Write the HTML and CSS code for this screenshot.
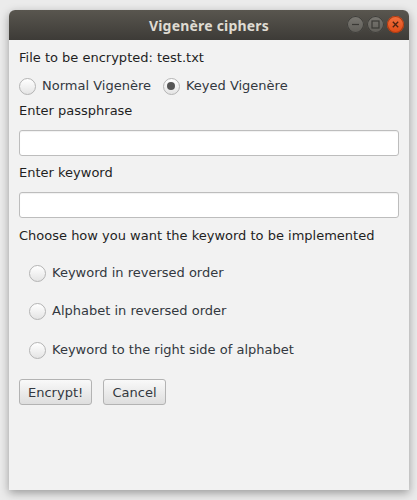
FILE: index.html
```html
<!DOCTYPE html>
<html>
<head>
<meta charset="utf-8">
<link rel="stylesheet" href="styles.css">
</head>
<body>
<div class="window">
  <div class="titlebar">
    <span class="title">Vigenère ciphers</span>
    <div class="controls">
      <span class="ctl ctl-min"><svg width="17" height="17" viewBox="0 0 17 17"><line x1="5" y1="8.5" x2="12" y2="8.5" stroke="#3a3935" stroke-width="1.2"/></svg></span>
      <span class="ctl ctl-max"><svg width="17" height="17" viewBox="0 0 17 17"><rect x="5" y="5" width="7" height="7" fill="none" stroke="#3a3935" stroke-width="1.2"/></svg></span>
      <span class="ctl ctl-close"><svg width="17" height="17" viewBox="0 0 17 17"><path d="M5.8 5.8 L11.2 11.2 M11.2 5.8 L5.8 11.2" stroke="#4a2312" stroke-width="1.3"/></svg></span>
    </div>
  </div>
  <div class="content">
    <div class="label first">File to be encrypted: test.txt</div>
    <div class="radio-row">
      <label class="radio"><span class="dot"></span><span class="rtext">Normal Vigenère</span></label>
      <label class="radio"><span class="dot checked"></span><span class="rtext">Keyed Vigenère</span></label>
    </div>
    <div class="label l-pass">Enter passphrase</div>
    <div class="field f-pass"></div>
    <div class="label l-key">Enter keyword</div>
    <div class="field f-key"></div>
    <div class="label l-choose">Choose how you want the keyword to be implemented</div>
    <div class="options">
      <label class="radio opt o1"><span class="dot"></span><span class="rtext">Keyword in reversed order</span></label>
      <label class="radio opt o2"><span class="dot"></span><span class="rtext">Alphabet in reversed order</span></label>
      <label class="radio opt o3"><span class="dot"></span><span class="rtext">Keyword to the right side of alphabet</span></label>
    </div>
    <div class="buttons">
      <button class="btn btn-enc">Encrypt!</button>
      <button class="btn btn-cancel">Cancel</button>
    </div>
  </div>
</div>
</body>
</html>
```
FILE: styles.css
```css
html, body {
  margin: 0;
  padding: 0;
}
body {
  width: 417px;
  height: 500px;
  background: #ebebeb;
  overflow: hidden;
  font-family: "DejaVu Sans", sans-serif;
  font-size: 13px;
}
.window {
  margin: 10px 0 0 9px;
  width: 400px;
  height: 480px;
  background: #f2f2f2;
  border-radius: 6px 6px 0 0;
  box-shadow: 0 3px 10px rgba(0,0,0,0.35);
  display: flex;
  flex-direction: column;
}
.titlebar {
  height: 30px;
  flex: none;
  border-radius: 6px 6px 0 0;
  background: linear-gradient(#59564f, #3d3b37);
  display: flex;
  align-items: center;
  justify-content: center;
  position: relative;
}
.title {
  color: #dfdbd2;
  font-family: "Noto Sans", "DejaVu Sans", sans-serif;
  font-weight: bold;
  font-size: 14px;
  letter-spacing: 0.2px;
}
.controls {
  position: absolute;
  right: 5px;
  top: 6px;
  display: flex;
  gap: 3px;
}
.ctl {
  width: 17px;
  height: 17px;
  border-radius: 50%;
  display: block;
  box-sizing: border-box;
}
.ctl svg { display: block; }
.ctl-min, .ctl-max {
  background: linear-gradient(#7a7872, #5f5d58);
  box-shadow: inset 0 0 0 1px #3f3e3a;
}
.ctl-close {
  background: linear-gradient(#f2713f, #df4b16);
  box-shadow: inset 0 0 0 1px #a83a12;
}
.content {
  padding: 0 10px;
  display: flex;
  flex-direction: column;
  color: #1f1f1f;
}
.label {
  height: 16px;
  line-height: 16px;
}
.first { margin-top: 10px; }
.radio-row {
  margin-top: 12px;
  display: flex;
  height: 16px;
  gap: 12px;
}
.radio {
  display: flex;
  align-items: center;
  height: 16px;
  line-height: 16px;
}
.rtext {
  color: #333840;
}
.dot {
  width: 17px;
  height: 17px;
  box-sizing: border-box;
  border-radius: 50%;
  border: 1px solid #b4b4b4;
  background: linear-gradient(#ffffff, #e4e4e4);
  margin-right: 6px;
  flex: none;
  position: relative;
}
.dot.checked::after {
  content: "";
  position: absolute;
  left: 3.5px;
  top: 3.5px;
  width: 8px;
  height: 8px;
  border-radius: 50%;
  background: #555;
}
.l-pass { margin-top: 9px; }
.field {
  height: 26px;
  box-sizing: border-box;
  border: 1px solid #bdbdbd;
  border-radius: 3px;
  background: #fff;
  box-shadow: inset 0 1px 1px rgba(0,0,0,0.06);
}
.f-pass { margin-top: 11px; }
.l-key { margin-top: 9px; }
.f-key { margin-top: 11px; }
.l-choose { margin-top: 10px; }
.options {
  display: flex;
  flex-direction: column;
  padding-left: 10px;
}
.o1 { margin-top: 21px; }
.o2 { margin-top: 22px; }
.o3 { margin-top: 23px; }
.buttons {
  margin-top: 21px;
  display: flex;
  gap: 11px;
}
.btn {
  height: 26px;
  box-sizing: border-box;
  border: 1px solid #b3b3b3;
  border-radius: 3px;
  background: linear-gradient(#f9f9f9, #dedede);
  font-family: "DejaVu Sans", sans-serif;
  font-size: 13px;
  color: #333840;
  padding: 0 8px;
  margin: 0;
}
.btn-enc { width: 73px; }
.btn-cancel { width: 63px; }
```
